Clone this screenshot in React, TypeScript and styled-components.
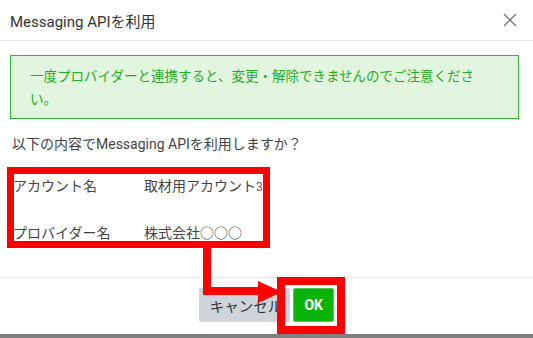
import styled, { createGlobalStyle } from "styled-components";

const GlobalStyle = createGlobalStyle`
  body {
    margin: 0;
    background: #ffffff;
    font-family: "Roboto", "Noto Sans CJK JP", sans-serif;
  }
`;

const Page = styled.div`
  position: relative;
  width: 533px;
  height: 338px;
  overflow: hidden;
  display: flex;
  flex-direction: column;
  background: #ffffff;
`;

const Header = styled.div`
  height: 40px;
  display: flex;
  align-items: center;
  justify-content: space-between;
  padding: 0 16px 0 10px;
  border-bottom: 1px solid #e6e6e6;
`;

const Title = styled.h1`
  margin: 0;
  font-size: 15px;
  font-weight: 400;
  color: #333333;
`;

const Body = styled.div`
  flex: 1;
  padding: 14px 14px 0 10px;
  display: flex;
  flex-direction: column;
`;

const Alert = styled.div`
  border: 1px solid #35b335;
  background: #e2f6df;
  color: #22ad22;
  font-size: 13.5px;
  line-height: 23px;
  padding: 9px 34px 7px 19px;
`;

const Question = styled.p`
  margin: 15px 0 0 2px;
  font-size: 14px;
  line-height: 20px;
  color: #444444;
`;

const Table = styled.div`
  margin-top: 7px;
  display: grid;
  grid-template-columns: 131px 1fr;
  grid-auto-rows: 47px;
  align-items: center;
  padding-left: 3px;
`;

const Cell = styled.div`
  font-size: 14px;
  color: #444444;
`;

const Small = styled.span`
  font-size: 12px;
  color: #666666;
`;

const Footer = styled.div`
  height: 57px;
  border-top: 1px solid #e6e6e6;
  display: flex;
  justify-content: center;
  align-items: flex-start;
  gap: 3px;
  padding: 10px 0 0 0;
  box-sizing: border-box;
`;

const Button = styled.button<{ $primary?: boolean }>`
  height: 34px;
  border: ${(p) => (p.$primary ? "1px solid #4fc94f" : "none")};
  border-radius: 2px;
  font-family: "Roboto", "Noto Sans CJK JP", sans-serif;
  font-size: ${(p) => (p.$primary ? "14px" : "14.5px")};
  font-weight: ${(p) => (p.$primary ? 700 : 400)};
  background: ${(p) => (p.$primary ? "#0ab30a" : "#cfd3da")};
  color: ${(p) => (p.$primary ? "#ffffff" : "#333333")};
  padding: ${(p) => (p.$primary ? "0" : "0 8px 0 11px")};
  width: ${(p) => (p.$primary ? "41px" : "auto")};
`;

const BottomBar = styled.div`
  height: 4px;
  background: #7f7f7f;
`;

const RedFrame = styled.div<{ $x: number; $y: number; $w: number; $h: number; $b: number }>`
  position: absolute;
  left: ${(p) => p.$x}px;
  top: ${(p) => p.$y}px;
  width: ${(p) => p.$w}px;
  height: ${(p) => p.$h}px;
  border: ${(p) => p.$b}px solid #ff0000;
  box-sizing: border-box;
  pointer-events: none;
`;

const Arrow = styled.svg`
  position: absolute;
  left: 0;
  top: 0;
  pointer-events: none;
`;

function CloseIcon() {
  return (
    <svg width="14" height="14" viewBox="0 0 14 14">
      <path d="M1 1 L13 13 M13 1 L1 13" stroke="#777777" strokeWidth="1.4" fill="none" />
    </svg>
  );
}

export default function App() {
  return (
    <>
      <GlobalStyle />
      <Page>
        <Header>
          <Title>Messaging APIを利用</Title>
          <CloseIcon />
        </Header>
        <Body>
          <Alert>一度プロバイダーと連携すると、変更・解除できませんのでご注意ください。</Alert>
          <Question>以下の内容でMessaging APIを利用しますか？</Question>
          <Table>
            <Cell>アカウント名</Cell>
            <Cell>
              取材用アカウント<Small>3</Small>
            </Cell>
            <Cell>プロバイダー名</Cell>
            <Cell>株式会社○○○</Cell>
          </Table>
        </Body>
        <Footer>
          <Button>キャンセル</Button>
          <Button $primary>OK</Button>
        </Footer>
        <BottomBar />

        <RedFrame $x={7} $y={167} $w={263} $h={81} $b={7} />
        <RedFrame $x={277} $y={277} $w={68} $h={57} $b={8} />
        <Arrow width="533" height="338">
          <polyline points="207,246 207,291 262,291" stroke="#ff0000" strokeWidth="8" fill="none" />
          <polygon points="258,281 282,292 258,303" fill="#ff0000" />
        </Arrow>
      </Page>
    </>
  );
}
